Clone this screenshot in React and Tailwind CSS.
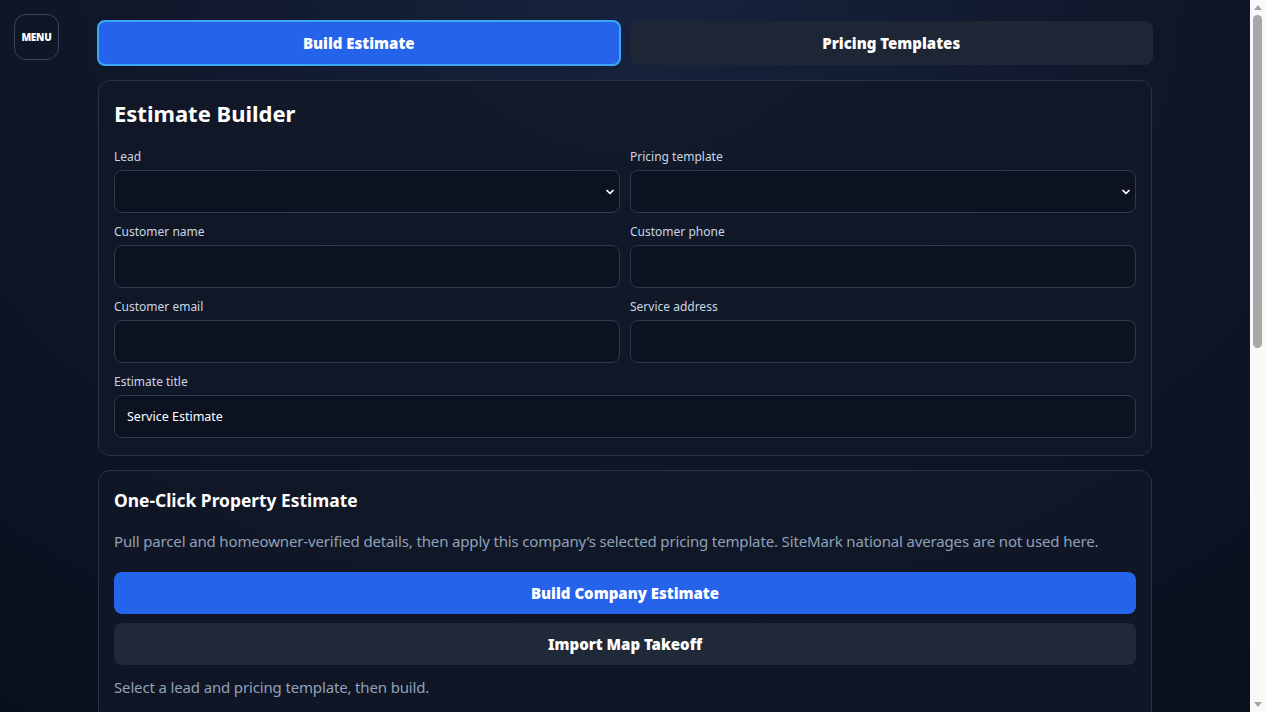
import React, { useState } from "react";
import { ChevronDown } from "lucide-react";

const font = { fontFamily: '"Noto Sans", "Open Sans", sans-serif' };

const Field = ({ label, select, value }) => (
  <label className="flex flex-col">
    <span className="text-[12px] leading-[16px] text-slate-300 mb-[5px]">{label}</span>
    {select ? (
      <div className="relative">
        <select className="w-full h-[43px] appearance-none rounded-lg border border-[#2d394c] bg-[#0c1220] px-3 text-sm text-white outline-none">
          <option value=""></option>
        </select>
        <ChevronDown
          className="absolute right-[4px] top-[16px] w-[12px] h-[12px] text-white pointer-events-none"
          strokeWidth={3.5}
        />
      </div>
    ) : (
      <input
        type="text"
        defaultValue={value || ""}
        className="w-full h-[43px] rounded-lg border border-[#2d394c] bg-[#0c1220] px-3 text-[12.5px] text-white outline-none"
      />
    )}
  </label>
);

const TabButton = ({ active, onClick, children }) => (
  <button
    onClick={onClick}
    className={
      active
        ? "h-[46px] rounded-lg border-2 border-[#3ba7f5] bg-[#2563eb] text-[15px] font-black"
        : "h-[44px] mt-px rounded-lg bg-[#1e2635] text-[15px] font-black"
    }
  >
    {children}
  </button>
);

export default function App() {
  const [tab, setTab] = useState("build");

  return (
    <div
      style={font}
      className="min-h-[1460px] w-full pr-[15px] bg-[#0b1120] bg-[radial-gradient(ellipse_90%_60%_at_50%_0%,#17233d_0%,#0f172a_45%,#0a0f1c_100%)] text-white"
    >
      {/* Menu */}
      <button className="fixed left-[14px] top-[14px] w-[45px] h-[46px] rounded-xl border border-[#3a4558] bg-[#0f1626] text-[10px] font-black tracking-tight text-white">
        MENU
      </button>

      {/* scrollbar */}
      <div className="fixed right-0 top-0 h-full w-[15px] bg-[#f9f9f9] flex flex-col items-center">
        <div className="h-[15px] flex items-center justify-center">
          <div className="w-0 h-0 border-l-[4px] border-r-[4px] border-b-[5px] border-l-transparent border-r-transparent border-b-[#a3a3a3]" />
        </div>
        <div className="w-[9px] h-[333px] rounded-t-full rounded-b-full bg-[#a8a8a8]" />
        <div className="flex-1" />
        <div className="h-[15px] flex items-center justify-center">
          <div className="w-0 h-0 border-l-[4px] border-r-[4px] border-t-[5px] border-l-transparent border-r-transparent border-t-[#a3a3a3]" />
        </div>
      </div>

      <div className="max-w-[1058px] mx-auto pt-[20px] px-px">
        {/* Tabs */}
        <div className="grid grid-cols-2 gap-[9px]">
          <TabButton active={tab === "build"} onClick={() => setTab("build")}>
            Build Estimate
          </TabButton>
          <TabButton active={tab === "templates"} onClick={() => setTab("templates")}>
            Pricing Templates
          </TabButton>
        </div>

        {/* Estimate Builder */}
        <section className="mt-[14px] mx-px rounded-xl border border-[#283345] bg-[#111827]/80 px-[15px] pt-[18px] pb-[17px]">
          <h1 className="text-[22px] leading-[28px] font-bold mb-[22px]">Estimate Builder</h1>
          <div className="grid grid-cols-2 gap-x-[10px] gap-y-[11px]">
            <Field label="Lead" select />
            <Field label="Pricing template" select />
            <Field label="Customer name" />
            <Field label="Customer phone" />
            <Field label="Customer email" />
            <Field label="Service address" />
            <div className="col-span-2">
              <Field label="Estimate title" value="Service Estimate" />
            </div>
          </div>
        </section>

        {/* One-click */}
        <section className="mt-[14px] mx-px rounded-xl border border-[#283345] bg-[#111827]/80 px-[15px] pt-[17px] pb-[40px]">
          <h2 className="text-[17.4px] leading-[24px] font-bold">One-Click Property Estimate</h2>
          <p className="mt-[17px] text-[15px] tracking-[-0.15px] leading-[24px] text-slate-400">
            Pull parcel and homeowner-verified details, then apply this company’s selected pricing template.
            SiteMark national averages are not used here.
          </p>
          <div className="mt-[19px] flex flex-col gap-[9px]">
            <button className="h-[42px] rounded-lg bg-[#2563eb] text-[15px] font-black">
              Build Company Estimate
            </button>
            <button className="h-[42px] rounded-lg bg-[#1f2937] text-[15px] font-black">
              Import Map Takeoff
            </button>
          </div>
          <p className="mt-[10px] text-[15px] tracking-[-0.15px] leading-[24px] text-slate-400">
            Select a lead and pricing template, then build.
          </p>
        </section>
      </div>
    </div>
  );
}
